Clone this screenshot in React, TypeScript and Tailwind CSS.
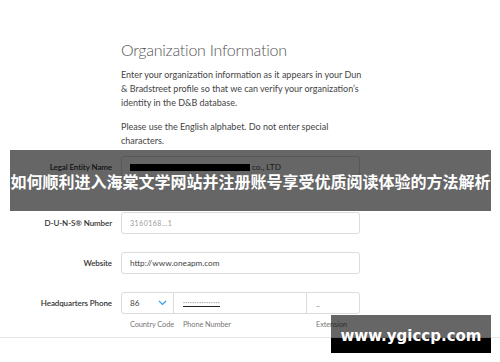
import React from "react";

function Label({ children }: { children: React.ReactNode }) {
  return (
    <div className="flex h-[22px] items-center justify-end whitespace-nowrap text-[8px] font-semibold tracking-[-0.1px] text-[#333]">
      {children}
    </div>
  );
}

function Input({ children }: { children: React.ReactNode }) {
  return (
    <div className="flex h-[22px] items-center rounded-[3px] border border-[#dcdcdc] bg-white px-[8px] text-[8.2px] text-[#444]">
      {children}
    </div>
  );
}

export default function App() {
  return (
    <div
      className="relative h-[362px] w-[500px] overflow-hidden bg-white"
      style={{ fontFamily: "Lato, 'Open Sans', sans-serif" }}
    >
      <div className="h-[338px] border-b border-[#e6e6e6] bg-white">
        <div className="pl-[121px] pt-[39px]">
          <h1 className="text-[16px] font-light leading-[21px] tracking-[-0.25px] text-[#555]">
            Organization Information
          </h1>
          <p className="mt-[8px] w-[245px] text-[9px] leading-[14px] text-[#444]">
            Enter your organization information as it appears in your Dun &amp; Bradstreet profile so that we can verify your organization’s identity in the D&amp;B database.
          </p>
          <p className="mt-[10px] w-[245px] text-[9px] leading-[14px] text-[#444]">
            Please use the English alphabet. Do not enter special characters.
          </p>
        </div>

        <div className="mt-[8px] grid grid-cols-[112px_239px] gap-x-[9px]">
          <Label>Legal Entity Name</Label>
          <Input>
            <span className="mr-[2px] inline-block h-[7px] w-[120px] bg-black" />
            <span>co., LTD</span>
          </Input>
          <div className="col-span-2 h-[34px]" />

          <Label>D-U-N-S® Number</Label>
          <Input>
            <span className="text-[7px] tracking-[0.5px] text-[#999]">3160168…1</span>
          </Input>
          <div className="col-span-2 h-[18px]" />

          <Label>Website</Label>
          <Input>http://www.oneapm.com</Input>
          <div className="col-span-2 h-[18px]" />

          <Label>Headquarters Phone</Label>
          <div>
            <div className="flex h-[22px] rounded-[3px] border border-[#dcdcdc] bg-white text-[8.2px] text-[#444]">
              <div className="flex w-[52px] items-center justify-between border-r border-[#dcdcdc] pl-[8px] pr-[6px]">
                <span>86</span>
                <svg width="9" height="6" viewBox="0 0 9 6" fill="none">
                  <path d="M1 1l3.5 3.5L8 1" stroke="#3b9be0" strokeWidth="1.2" />
                </svg>
              </div>
              <div className="flex w-[133px] items-center border-r border-[#dcdcdc] px-[9px]">
                <span className="border-b border-[#222] text-[7px] leading-[7px] tracking-[0.5px] text-[#888]">················</span>
              </div>
              <div className="flex flex-1 items-center px-[9px] text-[#777]">_</div>
            </div>
            <div className="mt-[5px] flex whitespace-nowrap text-[7.4px] tracking-[-0.1px] text-[#777]">
              <span className="w-[62px] pl-[9px]">Country Code</span>
              <span className="w-[133px]">Phone Number</span>
              <span>Extension</span>
            </div>
          </div>
        </div>
      </div>

      {/* Title banner overlay */}
      <div className="absolute left-[10px] top-[150px] flex h-[61px] w-[481px] items-center justify-center bg-black/60">
        <span
          className="whitespace-nowrap text-[16px] font-bold leading-none text-white"
          style={{ fontFamily: "'Noto Sans CJK SC', sans-serif" }}
        >
          如何顺利进入海棠文学网站并注册账号享受优质阅读体验的方法解析
        </span>
      </div>

      {/* Watermark */}
      <div className="absolute left-[331px] top-[315px] flex h-[38px] w-[160px] flex-col">
        <div className="h-[23px] bg-black/60" />
        <div className="h-[15px] bg-black" />
        <div
          className="absolute inset-0 flex items-center justify-center pt-[4px] text-[15px] font-bold text-white"
          style={{ fontFamily: "'DejaVu Sans', sans-serif" }}
        >
          www.ygiccp.com
        </div>
      </div>
    </div>
  );
}
